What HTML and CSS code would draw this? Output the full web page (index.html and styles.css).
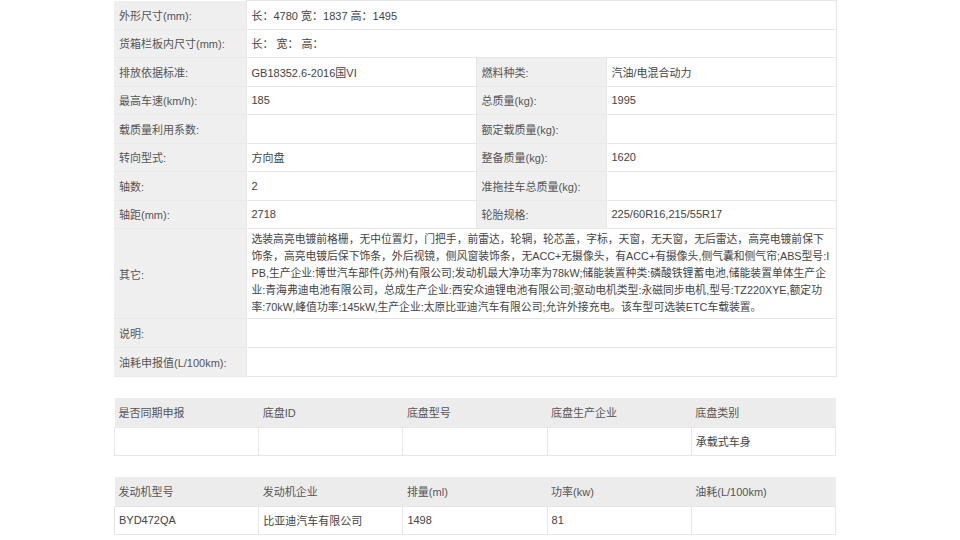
FILE: index.html
```html
<!DOCTYPE html>
<html lang="zh-CN">
<head>
<meta charset="utf-8">
<title>车辆参数</title>
<link rel="stylesheet" href="styles.css">
</head>
<body>
<div class="page">
  <table class="params">
    <colgroup>
      <col class="c-label"><col class="c-value"><col class="c-label2"><col class="c-value2">
    </colgroup>
    <tr><td class="lbl">外形尺寸(mm):</td><td class="val" colspan="3">长：4780 宽：1837 高：1495</td></tr>
    <tr><td class="lbl">货箱栏板内尺寸(mm):</td><td class="val" colspan="3">长： 宽： 高：</td></tr>
    <tr><td class="lbl">排放依据标准:</td><td class="val">GB18352.6-2016国VI</td><td class="lbl">燃料种类:</td><td class="val">汽油/电混合动力</td></tr>
    <tr><td class="lbl">最高车速(km/h):</td><td class="val">185</td><td class="lbl">总质量(kg):</td><td class="val">1995</td></tr>
    <tr><td class="lbl">载质量利用系数:</td><td class="val"></td><td class="lbl">额定载质量(kg):</td><td class="val"></td></tr>
    <tr><td class="lbl">转向型式:</td><td class="val">方向盘</td><td class="lbl">整备质量(kg):</td><td class="val">1620</td></tr>
    <tr><td class="lbl">轴数:</td><td class="val">2</td><td class="lbl">准拖挂车总质量(kg):</td><td class="val"></td></tr>
    <tr><td class="lbl">轴距(mm):</td><td class="val">2718</td><td class="lbl">轮胎规格:</td><td class="val">225/60R16,215/55R17</td></tr>
    <tr class="tall"><td class="lbl">其它:</td><td class="val long" colspan="3">选装高亮电镀前格栅，无中位置灯，门把手，前雷达，轮辋，轮芯盖，字标，天窗，无天窗，无后雷达，高亮电镀前保下<br>饰条，高亮电镀后保下饰条，外后视镜，侧风窗装饰条，无ACC+无摄像头，有ACC+有摄像头,侧气囊和侧气帘;ABS型号:I<br>PB,生产企业:博世汽车部件(苏州)有限公司;发动机最大净功率为78kW;储能装置种类:磷酸铁锂蓄电池,储能装置单体生产企<br>业:青海弗迪电池有限公司，总成生产企业:西安众迪锂电池有限公司;驱动电机类型:永磁同步电机,型号:TZ220XYE,额定功<br>率:70kW,峰值功率:145kW,生产企业:太原比亚迪汽车有限公司;允许外接充电。该车型可选装ETC车载装置。</td></tr>
    <tr><td class="lbl">说明:</td><td class="val" colspan="3"></td></tr>
    <tr><td class="lbl">油耗申报值(L/100km):</td><td class="val" colspan="3"></td></tr>
  </table>

  <table class="grid">
    <tr class="head"><td>是否同期申报</td><td>底盘ID</td><td>底盘型号</td><td>底盘生产企业</td><td>底盘类别</td></tr>
    <tr class="body"><td></td><td></td><td></td><td></td><td>承载式车身</td></tr>
  </table>

  <table class="grid">
    <tr class="head"><td>发动机型号</td><td>发动机企业</td><td>排量(ml)</td><td>功率(kw)</td><td>油耗(L/100km)</td></tr>
    <tr class="body"><td>BYD472QA</td><td>比亚迪汽车有限公司</td><td>1498</td><td>81</td><td></td></tr>
  </table>
</div>
</body>
</html>
```

FILE: styles.css
```css
html, body {
  margin: 0;
  padding: 0;
  background: #ffffff;
}
body {
  font-family: "Liberation Sans", "Noto Sans CJK SC", sans-serif;
  font-size: 11px;
  color: #4a4a4a;
}
.page {
  width: 722px;
  margin-left: 114px;
  display: flex;
  flex-direction: column;
  gap: 21px;
}
table {
  border-collapse: collapse;
  table-layout: fixed;
  width: 722px;
}
td {
  padding: 0 5px;
  vertical-align: middle;
  white-space: nowrap;
  overflow: hidden;
}
.c-label { width: 132px; }
.c-value { width: 230px; }
.c-label2 { width: 130px; }
.c-value2 { width: 230px; }

.params tr { height: 28.5px; }
.params .lbl {
  background: #efefef;
  color: #555555;
  border-bottom: 1px solid #e9e9e9;
}
.params .val {
  background: #ffffff;
  border: 1px solid #e6e6e6;
  color: #444444;
}
.params tr.tall { height: 88px; }
.params .long {
  font-size: 10.8px;
  line-height: 17px;
  padding-top: 2px;
  padding-bottom: 2px;
  padding-right: 2px;
  overflow: visible;
}
.params tr:last-child { height: 29px; }

.grid td {
  width: 20%;
  padding: 0 4px;
}
.grid .head td {
  height: 29px;
  background: #ececec;
  color: #555555;
}
.grid .body td {
  border: 1px solid #e6e6e6;
  color: #444444;
  height: 27px;
}
```
